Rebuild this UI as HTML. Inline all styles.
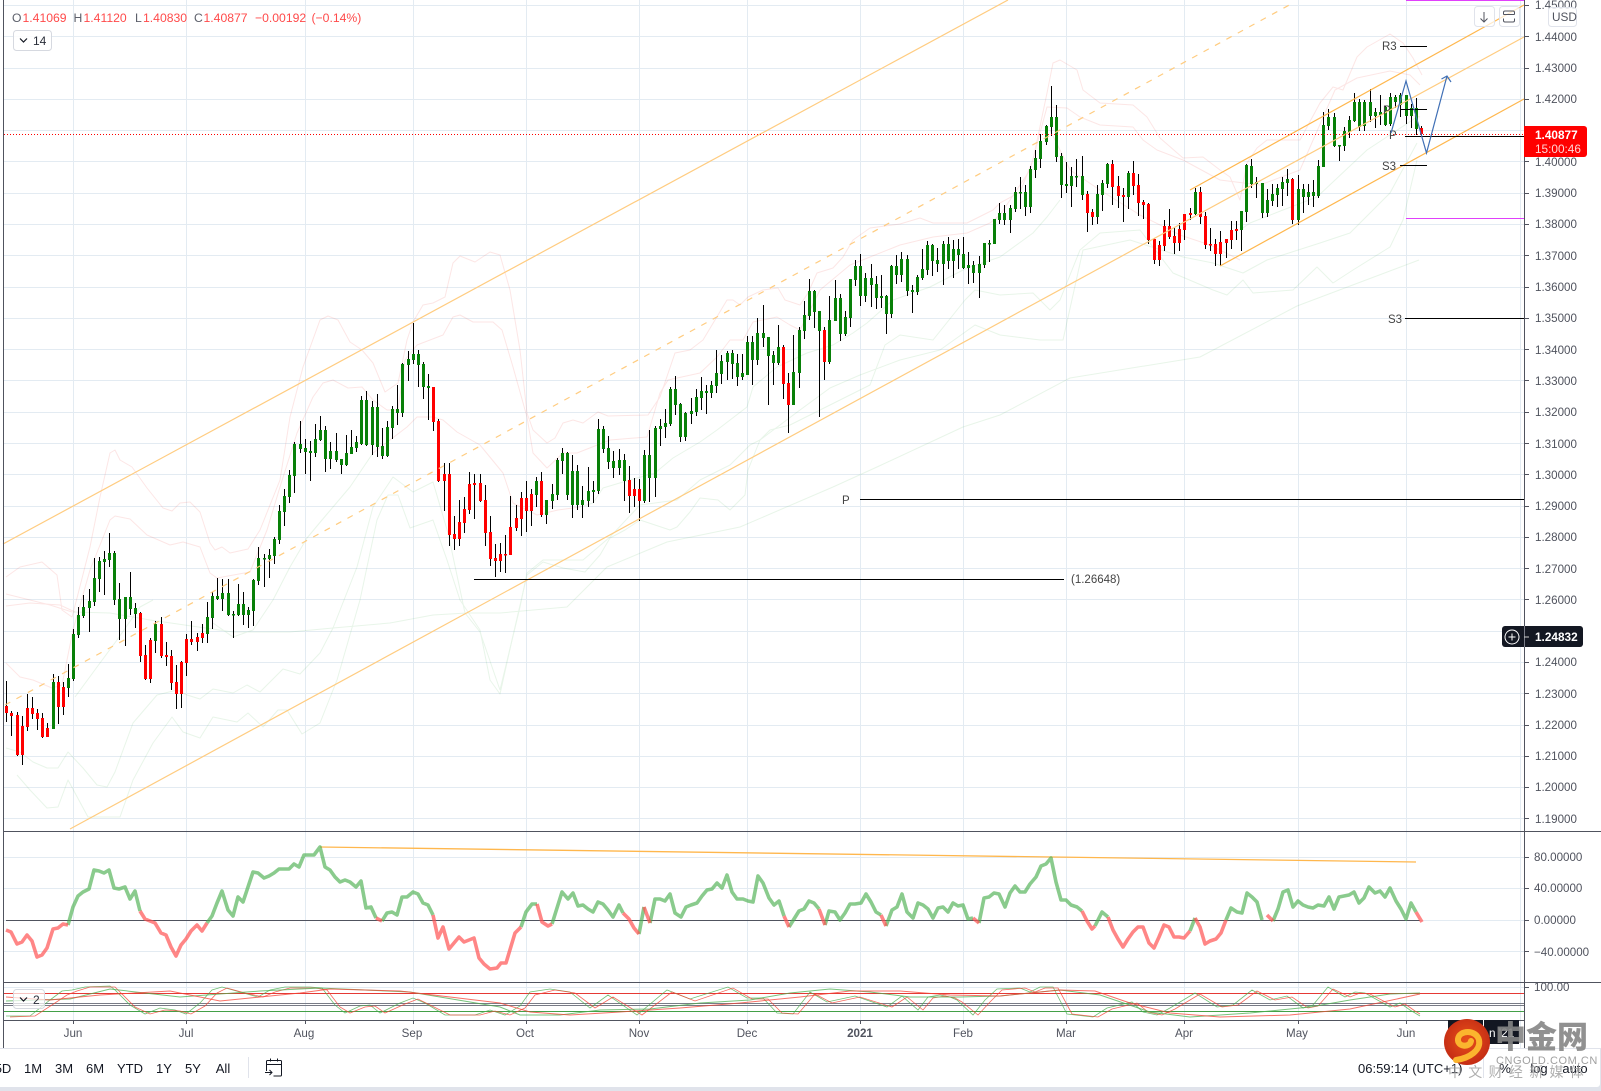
<!DOCTYPE html>
<html lang="en">
<head>
<meta charset="utf-8">
<title>Chart</title>
<style>
html,body{margin:0;padding:0;background:#fff;width:1601px;height:1091px;overflow:hidden}
svg{display:block;position:absolute;left:0;top:0}
text{font-family:"Liberation Sans","Noto Sans CJK SC",sans-serif}
.ax{font-size:11.6px;fill:#50535e}
.tm{font-size:11.6px;fill:#50535e;text-anchor:middle}
.tb{font-size:13px;fill:#131722;text-anchor:middle}
.lb{font-size:11.5px;fill:#444}
.o{font-size:12.2px;fill:#ff4a4a}
.og{font-size:12.2px;fill:#5d606b}
</style>
</head>
<body>
<svg width="1601" height="1091" viewBox="0 0 1601 1091" xmlns="http://www.w3.org/2000/svg">
<rect width="1601" height="1091" fill="#fff"/>

<!-- grid -->
<path stroke="#e3ebf2" stroke-width="1" fill="none" d="M73.5 0V1020M186.5 0V1020M305.5 0V1020M413.5 0V1020M526.5 0V1020M639.5 0V1020M747.5 0V1020M860.5 0V1020M963.5 0V1020M1066.5 0V1020M1184.5 0V1020M1298.5 0V1020M1406.5 0V1020M1520.5 0V1048"/>
<path stroke="#e3ebf2" stroke-width="1" fill="none" d="M4 5.5H1524M4 36.5H1524M4 68.5H1524M4 99.5H1524M4 130.5H1524M4 161.5H1524M4 193.5H1524M4 224.5H1524M4 255.5H1524M4 287.5H1524M4 318.5H1524M4 349.5H1524M4 380.5H1524M4 412.5H1524M4 443.5H1524M4 474.5H1524M4 506.5H1524M4 537.5H1524M4 568.5H1524M4 599.5H1524M4 631.5H1524M4 662.5H1524M4 693.5H1524M4 725.5H1524M4 756.5H1524M4 787.5H1524M4 818.5H1524M4 857.5H1524M4 888.5H1524M4 920.5H1524M4 951.5H1524M4 987.5H1524"/>

<!-- pale bands -->
<g fill="none" stroke-width="1" stroke-linejoin="round">
<g stroke="#ef5350" opacity=".14">
<polyline points="6,577 20,567 42,562 57,575 62,610 72,617 77,598 90,547 100,497 110,453 115,450 120,460 132,467 147,488 163,508 172,511 180,503 190,502 200,512 210,543 215,550 222,547 230,553 248,549 260,530 280,480 290,417 303,367 320,320 328,316 338,320 350,342 362,350 373,363 385,392 398,383 407,340 413,322 423,305 433,303 445,297 453,263 460,256 475,262 490,252 500,255 510,290 520,350 527,413 533,430 547,443 555,438 563,423 573,420 583,423 598,412 608,416 648,415 660,397 675,353 690,350 703,340 727,300 733,300 740,305 748,297 763,290 778,288 785,300 800,305 808,293 817,273 833,268 843,257 853,240 870,228 885,226 900,224 920,218 933,223 967,223 993,210 1000,203 1020,192 1033,160 1047,93 1053,63 1060,60 1077,70 1083,90 1100,103 1133,105 1147,117 1160,138 1183,158 1203,157 1220,170 1230,177 1240,200 1247,163 1257,148 1267,140 1300,140 1320,103 1333,87 1343,90 1357,57 1367,47 1390,34 1403,43 1413,58 1422,75"/>
<polyline points="6,663 20,677 33,680 52,688 62,685 73,630 90,570 110,520 115,516 130,519 147,535 170,545 183,542 200,547 210,573 217,578 250,572 267,530 280,487 297,433 313,397 323,383 333,380 348,388 362,387 373,400 387,410 398,410 405,360 417,345 430,340 443,335 453,317 460,315 473,322 493,322 502,330 513,367 527,417 533,453 547,468 563,453 577,453 610,440 647,437 660,393 668,380 700,373 717,357 730,340 743,340 753,322 777,317 790,325 800,330 820,290 850,265 900,245 933,237 967,233 990,223 1000,215 1030,170 1047,107 1067,108 1080,117 1100,125 1133,127 1143,140 1157,150 1183,160 1220,180 1260,185 1300,170 1335,90 1357,78 1390,71 1410,75 1420,85"/>
<polyline points="6,594 50,605 72,612"/>
<polyline points="6,606 30,603 60,605 75,612"/>
<polyline points="373,453 407,427 417,417 433,417 443,420 457,432 480,445 503,473 513,503 537,515 558,510 580,507"/>
<polyline points="1050,130 1070,170 1100,190 1140,215 1180,235 1210,245 1240,260"/>
<polyline points="1410,115 1420,117"/>
</g>
<g stroke="#4caf50" opacity=".12">
<polyline points="6,748 20,752 33,762 47,768 58,768 68,752 83,768 97,785 107,787 115,772 133,723 157,695 177,690 187,695 200,699 213,689 233,693 247,685 260,692 283,669 300,674 320,653 333,628 357,567 373,507 393,477 413,492 433,482 448,533 465,613 480,632 500,690"/>
<polyline points="17,775 30,790 47,808 58,807 68,780 88,817 120,817 133,780 153,743 172,717 183,732 200,738 213,717 237,722 248,713 263,727 278,710 287,710 302,734 320,723 337,680 360,600 377,520 388,495 398,495 410,528 433,520 447,560 460,600 480,630 490,680 500,694 512,640 527,575 543,562 563,568 585,572 600,555 610,538 625,530 640,520 655,525 670,530 677,527 690,512 700,498 718,500 730,510 745,495 748,470 760,440 770,430 790,425 810,415 840,400 870,385 885,345 900,335 933,340 965,300 975,290 1000,295 1033,293 1050,310 1060,300 1080,250 1100,233 1140,230 1173,273 1213,290 1227,295 1243,280 1253,293 1293,290 1317,267 1333,283 1353,270 1390,247 1403,220 1417,160"/>
<polyline points="500,690 520,607 527,573 543,560 583,560 610,537 640,505 677,500 700,480 730,465 750,445 760,440 800,410 830,388 860,375 900,360 940,350 975,325 1000,335 1040,340 1063,340 1083,250 1130,240 1183,257 1213,263 1243,273 1267,260 1320,243 1350,233 1390,193 1417,143"/>
<polyline points="75,697 100,663 117,640 140,607 153,600"/>
<polyline points="213,623 233,637 253,630 273,600 290,567 307,538 322,520 350,487 373,453"/>
<polyline points="580,507 593,503 603,488 623,482 655,473 673,458 700,442 717,430 747,407 753,387 777,367 807,353 833,345 853,333 867,323 893,300 930,287 967,268 1000,257 1033,233 1047,217 1060,200"/>
<polyline points="1240,230 1250,223 1283,210 1317,197 1367,150 1417,117"/>
<polyline points="73,612 110,613 150,620 233,632 290,632 333,628 390,623 433,615 467,613 500,613 567,607 607,567 667,542 740,527 833,487 877,467 963,427 1000,415 1070,378 1200,357 1297,306 1419,260"/>
</g>
</g>

<!-- wicks -->
<path stroke="#000" stroke-width="1" fill="none" shape-rendering="crispEdges" d="M6.5 681V722M11.5 711V736M17.5 712V756M22.5 716V765M27.5 694V731M32.5 697V719M37.5 709V730M42.5 713V738M47.5 723V737M53.5 674V729M58.5 676V724M63.5 682V715M68.5 664V697M73.5 629V681M78.5 607V638M83.5 595V618M89.5 589V632M94.5 558V606M99.5 557V592M104.5 551V595M109.5 533V567M114.5 551V605M119.5 583V640M125.5 597V646M130.5 572V615M135.5 603V628M140.5 612V662M145.5 645V680M150.5 638V683M155.5 621V653M161.5 617V658M166.5 642V666M171.5 650V690M176.5 665V709M181.5 661V708M186.5 634V676M191.5 621V645M197.5 633V651M202.5 624V643M207.5 602V643M212.5 592V629M217.5 578V600M222.5 579V611M228.5 579V616M233.5 611V638M238.5 584V616M243.5 592V625M248.5 607V628M253.5 579V626M258.5 547V585M264.5 554V587M269.5 549V578M274.5 537V564M279.5 505V544M284.5 489V526M289.5 470V503M294.5 442V493M300.5 421V453M305.5 439V474M310.5 441V481M315.5 424V457M320.5 416V441M325.5 426V472M330.5 442V469M336.5 433V462M341.5 459V474M346.5 435V466M351.5 430V454M356.5 436V452M361.5 396V445M366.5 391V446M372.5 401V455M377.5 394V457M382.5 428V459M387.5 421V457M392.5 406V439M397.5 385V425M402.5 363V417M408.5 351V381M413.5 323V364M418.5 350V387M423.5 362V399M428.5 374V420M433.5 387V431M438.5 419V482M444.5 463V511M449.5 463V546M454.5 516V550M459.5 500V546M464.5 497V533M469.5 472V514M474.5 474V519M480.5 474V502M485.5 485V546M490.5 516V566M495.5 544V577M500.5 543V572M505.5 535V573M510.5 496V555M516.5 505V531M521.5 492V536M526.5 481V532M531.5 489V526M536.5 477V507M541.5 472V517M546.5 500V524M552.5 484V509M557.5 458V500M562.5 448V474M567.5 452V500M572.5 455V518M577.5 465V510M582.5 486V518M588.5 467V507M593.5 481V503M598.5 419V494M603.5 426V453M608.5 436V469M613.5 451V478M619.5 449V475M624.5 454V501M629.5 466V513M634.5 478V507M639.5 479V521M644.5 450V503M649.5 430V502M655.5 426V497M660.5 419V446M665.5 409V438M670.5 387V426M675.5 376V415M680.5 403V442M685.5 412V441M691.5 398V424M696.5 389V416M701.5 377V410M706.5 385V414M711.5 381V398M716.5 350V393M721.5 355V384M727.5 351V380M732.5 350V379M737.5 354V386M742.5 354V380M747.5 336V375M752.5 336V385M757.5 318V365M763.5 305V347M768.5 337V405M773.5 351V385M778.5 325V365M783.5 345V399M788.5 373V433M793.5 335V405M799.5 327V388M804.5 301V339M809.5 279V320M814.5 290V328M819.5 311V417M824.5 327V380M829.5 296V364M835.5 280V321M840.5 294V341M845.5 311V336M850.5 279V327M855.5 260V286M860.5 254V306M865.5 273V302M871.5 264V307M876.5 276V309M881.5 275V308M886.5 295V334M891.5 265V318M896.5 255V284M901.5 252V282M907.5 255V296M912.5 285V313M917.5 275V295M922.5 249V280M927.5 241V275M932.5 244V276M937.5 248V272M943.5 241V285M948.5 237V269M953.5 240V278M958.5 239V269M963.5 237V269M968.5 252V284M973.5 261V283M979.5 256V298M984.5 243V268M989.5 240V262M994.5 219V244M999.5 203V224M1004.5 205V225M1010.5 205V233M1015.5 187V212M1020.5 177V209M1025.5 185V216M1030.5 166V213M1035.5 150V178M1040.5 134V168M1046.5 125V145M1051.5 86V136M1056.5 105V162M1061.5 153V198M1066.5 162V193M1071.5 167V207M1076.5 159V187M1082.5 156V200M1087.5 191V232M1092.5 209V225M1097.5 185V224M1102.5 180V211M1107.5 163V188M1112.5 160V205M1118.5 176V208M1123.5 188V222M1128.5 171V209M1133.5 161V195M1138.5 174V216M1143.5 200V219M1148.5 203V244M1154.5 238V264M1159.5 241V266M1164.5 220V251M1169.5 209V239M1174.5 228V254M1179.5 223V251M1184.5 214V240M1190.5 208V220M1195.5 188V215M1200.5 187V224M1205.5 212V249M1210.5 228V251M1215.5 239V266M1220.5 231V266M1226.5 239V258M1231.5 221V249M1236.5 221V240M1241.5 211V251M1246.5 164V222M1251.5 159V188M1256.5 177V198M1262.5 183V218M1267.5 189V217M1272.5 184V206M1277.5 184V207M1282.5 177V206M1287.5 169V196M1292.5 178V224M1298.5 175V225M1303.5 184V213M1308.5 184V205M1313.5 180V207M1318.5 160V198M1323.5 112V167M1328.5 109V130M1334.5 113V147M1339.5 145V161M1344.5 127V151M1349.5 116V138M1354.5 93V122M1359.5 99V131M1364.5 100V131M1370.5 89V122M1375.5 108V128M1380.5 95V125M1385.5 106V126M1390.5 93V126M1395.5 95V108M1400.5 93V117M1406.5 95V124M1411.5 104V128M1416.5 98V135M1421.5 126V135"/>

<!-- green bodies -->
<path stroke="#088008" stroke-width="3" fill="none" shape-rendering="crispEdges" d="M53.5 682V729M68.5 678V688M73.5 634V679M78.5 615V635M83.5 607V616M89.5 601V608M94.5 578V602M99.5 561V579M104.5 559V562M109.5 553V560M114.5 553V600M119.5 599V619M125.5 597V619M130.5 597V609M135.5 608V614M155.5 624V641M207.5 617V634M212.5 596V618M217.5 596V599M222.5 593V599M228.5 593V615M233.5 614V615.5M238.5 604V615M243.5 604V615M248.5 610V615M253.5 580V611M258.5 558V581M264.5 558V559.5M269.5 555V559M274.5 539V556M279.5 511V540M284.5 496V512M289.5 475V497M294.5 444V476M300.5 444V449M305.5 448V452M310.5 451V453M315.5 439V453M320.5 430V440M325.5 430V459M330.5 451V459M336.5 451V460M341.5 459V465M346.5 453V465M351.5 447V454M356.5 442V448M361.5 400V444M366.5 400V445M372.5 407V445M377.5 407V447M382.5 446V456M387.5 427V456M392.5 409V428M397.5 409V413M402.5 364V413M408.5 359V365M413.5 354V360M418.5 354V365M423.5 364V387M428.5 386V388M536.5 481V495M546.5 500V515M552.5 494V501M557.5 460V495M562.5 453V461M567.5 453V495M572.5 471V505M577.5 471V505M582.5 500V505M588.5 491V501M593.5 490V492M598.5 429V491M603.5 429V449M608.5 448V462M613.5 461V468M619.5 460V468M624.5 460V481M644.5 455V501M649.5 455V478M655.5 428V478M660.5 426V429M665.5 423V427M670.5 389V424M675.5 389V405M680.5 404V437M685.5 413V437M691.5 411V414M696.5 397V412M701.5 391V398M706.5 391V393M711.5 385V393M716.5 373V386M721.5 361V374M727.5 353V362M732.5 353V364M737.5 363V377M742.5 373V377M747.5 342V375M752.5 342V360M757.5 333V360M763.5 333V338M768.5 337V356M773.5 355V363M778.5 347V363M793.5 372V405M799.5 330V373M804.5 315V331M809.5 291V316M814.5 291V312M819.5 311V331M829.5 320V362M835.5 298V321M840.5 298V334M845.5 317V334M850.5 279V318M855.5 266V280M860.5 266V296M865.5 278V296M871.5 278V285M876.5 284V298M881.5 296V298M886.5 296V314M891.5 266V314M896.5 266V275M901.5 259V275M907.5 259V291M912.5 290V292M917.5 277V292M922.5 269V278M927.5 245V270M932.5 245V261M937.5 260V264M943.5 244V264M948.5 244V261M953.5 249V261M958.5 249V255M963.5 254V268M968.5 265V268M973.5 265V273M979.5 264V273M984.5 243V265M989.5 243V244.5M994.5 219V244M999.5 213V220M1004.5 213V220M1010.5 208V220M1015.5 192V209M1020.5 192V193.5M1025.5 192V207M1030.5 169V207M1035.5 158V170M1040.5 141V159M1046.5 126V142M1051.5 117V127M1056.5 117V157M1061.5 156V185M1066.5 184V186M1071.5 176V186M1076.5 176V177.5M1082.5 176V195M1097.5 194V217M1102.5 183V195M1107.5 164V184M1128.5 173V197M1195.5 192V214M1241.5 211V230M1246.5 165V212M1251.5 166V184M1256.5 182V184M1262.5 183V213M1267.5 200V213M1272.5 194V201M1277.5 188V195M1282.5 182V189M1287.5 179V183M1298.5 189V220M1303.5 189V197M1308.5 192V197M1313.5 192V196M1318.5 166V196M1323.5 125V167M1328.5 117V126M1334.5 117V146M1339.5 145V146.5M1344.5 131V146M1349.5 120V132M1354.5 102V121M1359.5 102V127M1364.5 102V126M1370.5 102V116M1375.5 112V116M1380.5 112V115M1385.5 107V125M1390.5 97V124M1395.5 97V102M1400.5 95V105M1406.5 95V116M1411.5 108V116M1416.5 108V129"/>

<!-- red bodies -->
<path stroke="#ff0000" stroke-width="3" fill="none" shape-rendering="crispEdges" d="M6.5 706V713M11.5 713V716M17.5 715V755M22.5 726V755M27.5 708V727M32.5 708V714M37.5 713V719M42.5 718V737M47.5 728V737M58.5 682V707M63.5 687V707M140.5 613V656M145.5 655V679M150.5 640V679M161.5 624V656M166.5 655V657M171.5 656V683M176.5 682V694M181.5 662V694M186.5 639V663M191.5 639V642M197.5 637V642M202.5 633V638M433.5 387V422M438.5 421V481M444.5 474V481M449.5 474V535M454.5 534V539M459.5 522V539M464.5 509V523M469.5 484V510M474.5 483V485M480.5 483V501M485.5 500V533M490.5 532V559M495.5 558V561M500.5 554V561M505.5 554V555.5M510.5 527V555M516.5 518V528M521.5 498V519M526.5 498V511M531.5 494V511M541.5 481V515M629.5 480V496M634.5 489V496M639.5 489V501M783.5 347V384M788.5 383V405M824.5 330V362M1087.5 194V213M1092.5 212V217M1112.5 164V187M1118.5 186V196M1123.5 195V197M1133.5 173V186M1138.5 185V203M1143.5 202V205M1148.5 204V240M1154.5 239V260M1159.5 245V260M1164.5 226V246M1169.5 226V237M1174.5 236V243M1179.5 229V243M1184.5 214V230M1190.5 213V215M1200.5 192V217M1205.5 216V245M1210.5 244V245.5M1215.5 244V254M1220.5 242V254M1226.5 239V243M1231.5 230V240M1236.5 229V231M1292.5 179V220M1421.5 128V134"/>

<!-- channel lines -->
<g fill="none" stroke-width="1.2">
<path stroke="#ffcc80" d="M3 544L1008 0"/>
<path stroke="#ffcc80" stroke-dasharray="6 7" d="M5 705L1293 3"/>
<path stroke="#ffcc80" d="M70 829L1524 37"/>
<path stroke="#ffb74d" d="M1190 190L1524 5"/>
<path stroke="#ffb74d" d="M1220 266L1524 99"/>
</g>

<!-- price dotted -->
<path stroke="#f00" stroke-width="1" stroke-dasharray="1 2" d="M4 134.5H1524"/>

<!-- horizontals -->
<g stroke-width="1" shape-rendering="crispEdges" fill="none">
<path stroke="#e040fb" d="M1406 0.5H1524M1406 218.5H1524"/>
<path stroke="#000" d="M1400 46.5H1427M1400 109.5H1427M1400 165.5H1427M1405 136.5H1524M1405 318.5H1524M860 499.5H1524M474 579.5H1064"/>
</g>
<text class="lb" x="1382" y="50">R3</text>
<text class="lb" x="1383" y="114">P</text>
<text class="lb" x="1389" y="139">P</text>
<text class="lb" x="1382" y="170">S3</text>
<text class="lb" x="1388" y="323">S3</text>
<text class="lb" x="842" y="504">P</text>
<text class="lb" x="1071" y="583">(1.26648)</text>

<!-- blue zig -->
<g fill="none" stroke="#3f6fb5" stroke-width="1.2">
<path d="M1391 133L1406 81L1426.5 153L1447 76"/>
<path d="M1441.500 79L1447 76L1451 82"/>
</g>

<!-- RSI -->
<path d="M6 920.5H1420" stroke="#50535e" stroke-width="1"/>
<path d="M320 847L1416 862" stroke="#ffb74d" stroke-width="1.3" fill="none"/>
<g fill="none" stroke-width="3.6" stroke-linejoin="round">
<path stroke="#4caf50" opacity=".65" d="M68 925L73 907L78 896L83 892L89 889L94 870L99 871L104 873L109 870L114 888L119 889L125 887L130 899L135 891L140 911M207 923L212 916L217 903L222 891L228 910L233 916L238 897L243 902L248 887L253 872L258 873L264 878L269 876L274 873L279 869L284 869L289 869L294 864L299 867L304 855L309 855L314 855L320 847L325 867L330 870L335 877L340 882L345 880L350 882L356 887L361 881L366 908L371 907L376 918M382 921L387 913L392 912L397 915L402 897L407 897L413 892L418 894L423 903L428 905L433 915M521 927L526 912L532 904L537 904M552 924L557 908L562 892L568 899L573 893L578 906L583 905L588 909L593 912L598 902L603 904L608 910L613 917L619 905L623 913M639 934L644 907M650 923L655 899L660 899L665 901L670 894L675 913L681 917L686 907L691 905L697 903L702 896L707 890L712 889L717 883L722 888L727 875L732 892L737 899L743 899L748 901L753 902L758 876L763 883L769 898L774 905L779 901L784 916M789 927L794 919L799 911L804 909L809 901L814 903L819 909M825 925L829 911L835 912L840 920L845 913L850 904L855 904L861 903L866 894L871 902L876 912L881 915M886 926L892 910L897 907L902 894L907 912L913 918L918 903L923 905L928 909L933 918L938 908L943 907L948 912L953 903L958 906L963 905L968 919L973 918M979 923L984 898L989 897L994 893L999 894L1005 907L1010 893L1015 886L1020 892L1025 892L1030 884L1036 877L1041 866L1046 864L1051 858L1056 882L1061 900L1066 900L1071 905L1077 907L1082 911M1095 926L1102 912L1108 917M1190 931L1195 918M1226 920L1231 908L1237 912L1242 913L1247 893L1252 897L1257 902L1262 920M1273 921L1278 909L1283 892L1288 890L1293 907L1298 901L1303 905L1308 907L1313 908L1318 905L1324 906L1329 897L1334 909L1339 897L1344 896L1349 895L1354 892L1359 903L1364 898L1369 887L1375 893L1380 891L1385 897L1390 888L1396 901L1401 909L1406 919L1411 903L1416 912"/>
<path stroke="#ff5252" opacity=".7" d="M6 930L11 932L17 944L22 942L27 935L32 941L37 957L42 955L47 948L53 929L58 928L63 924L68 925M140 911L145 919L150 921L155 923L161 933L166 935L171 947L176 956L181 945L186 939L191 931L197 925L202 931L207 923M376 918L382 921M433 915L438 938L443 927L449 949L459 937L464 942L474 938L479 958L484 964L490 969L497 968L501 963L506 963L515 933L521 927M537 904L542 922L548 926L552 924M623 913L629 919L634 928L639 934M644 907L650 923M784 916L789 927M819 909L825 925M881 915L886 926M973 918L979 923M1082 911L1087 921L1092 929L1095 926M1108 917L1113 930L1118 939L1123 947L1128 939L1133 932L1138 927L1143 927L1149 943L1154 948L1159 937L1164 925L1169 927L1174 937L1179 937L1184 938L1190 931M1195 918L1200 927L1205 944L1210 941L1216 939L1221 933L1226 920M1267 915L1273 921M1416 912L1422 922"/>
</g>

<!-- stochastic -->
<g fill="none">
<path d="M4 1003.500H1524M4 1005.500H1524" stroke="#787b86" stroke-width="1"/>
<path d="M4 993.500H1524" stroke="#e53935" stroke-width="1"/>
<path d="M4 1011.500H1524" stroke="#43a047" stroke-width="1"/>
<polyline stroke="#4caf50" stroke-width=".8" opacity=".8" points="6,1016 30,1016 50,1000 62,991 72,990 85,987 110,986 115,990 130,1005 145,1014 160,1008 175,1010 186,1014 200,1003 212,990 222,987 240,992 258,997 270,990 285,987 310,987 322,988 335,1005 345,1013 360,1006 370,1005 380,1013 400,1003 413,998 425,1003 445,1015 475,1015 490,1010 505,1015 520,1006 530,992 550,989 570,992 590,1008 608,995 637,1015 667,990 690,999 728,987 747,998 763,998 777,1013 793,1014 810,992 827,1002 855,996 887,1007 902,996 918,1010 928,997 940,995 950,997 957,1000 973,1015 985,1000 997,989 1020,988 1030,992 1040,987 1053,987 1067,1014 1093,1017 1107,1008 1132,1002 1143,1012 1157,1015 1170,1008 1195,993 1217,1007 1233,1005 1252,990 1270,1000 1287,996 1303,1008 1313,1005 1328,987 1345,997 1355,992 1365,993 1390,1007 1400,1003 1410,1010 1420,1016"/>
<polyline stroke="#f44336" stroke-width=".8" opacity=".8" points="10,1017 35,1016 55,1003 67,995 77,991 90,987 115,987 120,992 135,1007 150,1014 165,1010 180,1011 191,1014 205,1006 217,993 227,988 245,993 263,997 275,992 290,988 315,988 327,990 340,1007 350,1013 365,1007 375,1006 385,1013 405,1004 418,999 430,1005 450,1015 480,1015 495,1011 510,1015 525,1008 535,995 555,990 575,993 595,1008 613,997 642,1015 672,992 695,1001 733,988 752,999 768,999 782,1013 798,1014 815,994 832,1003 860,997 892,1007 907,997 923,1010 933,998 945,996 955,998 962,1002 978,1015 990,1002 1002,990 1025,988 1035,992 1045,988 1058,988 1072,1014 1098,1017 1112,1009 1137,1003 1148,1012 1162,1015 1175,1009 1200,994 1222,1007 1238,1005 1257,991 1275,1000 1292,997 1308,1008 1318,1006 1333,989 1350,997 1360,993 1370,994 1395,1007 1405,1004 1415,1011 1420,1014"/>
<polyline stroke="#4caf50" stroke-width="1" opacity=".75" points="6,1001 70,999 110,989 180,997 260,991 320,988 410,992 500,1007 520,1015 560,1015 600,1010 650,1009 700,1003 750,1000 790,993 830,989 870,992 910,997 960,997 1000,996 1060,990 1100,995 1150,1012 1190,1017 1250,1013 1310,1007 1350,1000 1390,994 1420,993"/>
<polyline stroke="#f44336" stroke-width="1" opacity=".75" points="6,997 50,1000 100,995 170,991 220,1001 300,993 330,989 400,991 500,1003 530,1012 570,1015 620,1012 680,1008 740,1003 800,997 850,991 900,991 950,995 1000,996 1060,990 1095,991 1130,1003 1170,1013 1220,1017 1290,1015 1350,1009 1420,994"/>
</g>

<!-- frame lines -->
<g stroke="#50535e" stroke-width="1" fill="none" shape-rendering="crispEdges">
<path d="M3.500 0V1048"/>
<path d="M1524.500 0V1048"/>
<path d="M3 831.500H1601M3 982.500H1601M3 1020.500H1524"/>
<path d="M1524 5.500h5M1524 36.500h5M1524 68.500h5M1524 99.500h5M1524 161.500h5M1524 193.500h5M1524 224.500h5M1524 255.500h5M1524 287.500h5M1524 318.500h5M1524 349.500h5M1524 380.500h5M1524 412.500h5M1524 443.500h5M1524 474.500h5M1524 506.500h5M1524 537.500h5M1524 568.500h5M1524 599.500h5M1524 631.500h5M1524 662.500h5M1524 693.500h5M1524 725.500h5M1524 756.500h5M1524 787.500h5M1524 818.500h5M1524 857.500h5M1524 888.500h5M1524 920.500h5M1524 951.500h5M1524 987.500h5"/>
<path d="M73.500 1020v4M186.500 1020v4M305.500 1020v4M413.500 1020v4M526.500 1020v4M639.500 1020v4M747.500 1020v4M860.500 1020v4M963.500 1020v4M1066.500 1020v4M1184.500 1020v4M1298.500 1020v4M1406.500 1020v4"/>
</g>

<!-- axis labels -->
<g class="ax">
<text class="ax" x="1535" y="9">1.45000</text>
<text class="ax" x="1535" y="41">1.44000</text>
<text class="ax" x="1535" y="72">1.43000</text>
<text class="ax" x="1535" y="103">1.42000</text>
<text class="ax" x="1535" y="166">1.40000</text>
<text class="ax" x="1535" y="197">1.39000</text>
<text class="ax" x="1535" y="228">1.38000</text>
<text class="ax" x="1535" y="260">1.37000</text>
<text class="ax" x="1535" y="291">1.36000</text>
<text class="ax" x="1535" y="322">1.35000</text>
<text class="ax" x="1535" y="354">1.34000</text>
<text class="ax" x="1535" y="385">1.33000</text>
<text class="ax" x="1535" y="416">1.32000</text>
<text class="ax" x="1535" y="448">1.31000</text>
<text class="ax" x="1535" y="479">1.30000</text>
<text class="ax" x="1535" y="510">1.29000</text>
<text class="ax" x="1535" y="541">1.28000</text>
<text class="ax" x="1535" y="573">1.27000</text>
<text class="ax" x="1535" y="604">1.26000</text>
<text class="ax" x="1535" y="666">1.24000</text>
<text class="ax" x="1535" y="698">1.23000</text>
<text class="ax" x="1535" y="729">1.22000</text>
<text class="ax" x="1535" y="760">1.21000</text>
<text class="ax" x="1535" y="791">1.20000</text>
<text class="ax" x="1535" y="823">1.19000</text>
<text class="ax" x="1534" y="861">80.00000</text>
<text class="ax" x="1534" y="892">40.00000</text>
<text class="ax" x="1534" y="924">0.00000</text>
<text class="ax" x="1534" y="956">−40.00000</text>
<text class="ax" x="1534" y="991">100.00</text>
</g>

<!-- current price label -->
<path d="M1524 126H1584a3 3 0 0 1 3 3V154a3 3 0 0 1-3 3H1524Z" fill="#f00"/>
<text x="1535" y="139" font-size="11.800" font-weight="bold" fill="#fff">1.40877</text>
<text x="1535" y="153" font-size="11.800" fill="#ffd6d6">15:00:46</text>

<!-- crosshair price label -->
<path d="M1505 626H1580a3 3 0 0 1 3 3V644a3 3 0 0 1-3 3H1505a3 3 0 0 1-3-3V629a3 3 0 0 1 3-3Z" fill="#131722"/>
<path d="M1524.500 626V647" stroke="#787b86"/>
<path d="M1524 637h5" stroke="#ccc"/>
<circle cx="1512" cy="637" r="7" fill="none" stroke="#fff" stroke-width="1"/>
<path d="M1508.500 637h7M1512 633.500v7" stroke="#fff" stroke-width="1"/>
<text x="1535" y="641" font-size="11.800" font-weight="bold" fill="#fff">1.24832</text>

<!-- top right buttons -->
<g fill="#fff" fill-opacity=".7" stroke="#e0e3eb">
<rect x="1474.500" y="6.500" width="20" height="20" rx="3"/>
<rect x="1499.500" y="6.500" width="20" height="20" rx="3"/>
<rect x="1548.500" y="7.500" width="28" height="19" rx="3" fill-opacity=".85"/>
</g>
<path d="M1484 12v10M1480.500 18.500L1484 22L1487.500 18.500" fill="none" stroke="#50535e" stroke-width="1"/>
<path d="M1503.500 14.500v-2a1.500 1.500 0 0 1 1.500-1.500h8a1.500 1.500 0 0 1 1.500 1.500v2M1503.500 18.500v2a1.500 1.500 0 0 0 1.500 1.500h8a1.500 1.500 0 0 0 1.500-1.500v-2M1503.500 14.500h11" fill="none" stroke="#50535e" stroke-width="1"/>
<text x="1552" y="21" font-size="11.800" fill="#50535e">USD</text>

<!-- legend -->
<text class="og" x="12" y="22">O</text><text class="o" x="22.500" y="22">1.41069</text>
<text class="og" x="73.500" y="22">H</text><text class="o" x="83.500" y="22">1.41120</text>
<text class="og" x="135" y="22">L</text><text class="o" x="143" y="22">1.40830</text>
<text class="og" x="194" y="22">C</text><text class="o" x="203.500" y="22">1.40877</text>
<text class="o" x="255" y="22">−0.00192</text>
<text class="o" x="311.500" y="22">(−0.14%)</text>

<rect x="13.500" y="30.500" width="38" height="20" rx="3" fill="#fff" fill-opacity=".85" stroke="#d6d9e0"/>
<path d="M20 38.500L23.500 42L27 38.500" fill="none" stroke="#131722" stroke-width="1.200"/>
<text x="33" y="45" font-size="12" fill="#2a2e39">14</text>

<rect x="13.500" y="989.500" width="31" height="19" rx="3" fill="#fff" fill-opacity=".7" stroke="#d6d9e0"/>
<path d="M20 997.500L23.500 1001L27 997.500" fill="none" stroke="#131722" stroke-width="1.200"/>
<text x="33" y="1004" font-size="12" fill="#2a2e39">2</text>

<!-- time labels -->
<text class="tm" x="73" y="1037">Jun</text>
<text class="tm" x="186" y="1037">Jul</text>
<text class="tm" x="304" y="1037">Aug</text>
<text class="tm" x="412" y="1037">Sep</text>
<text class="tm" x="525" y="1037">Oct</text>
<text class="tm" x="639" y="1037">Nov</text>
<text class="tm" x="747" y="1037">Dec</text>
<text class="tm" x="860" y="1037" font-weight="bold">2021</text>
<text class="tm" x="963" y="1037">Feb</text>
<text class="tm" x="1066" y="1037">Mar</text>
<text class="tm" x="1184" y="1037">Apr</text>
<text class="tm" x="1297" y="1037">May</text>
<text class="tm" x="1406" y="1037">Jun</text>

<!-- date crosshair label -->
<rect x="1448" y="1020" width="71" height="24" fill="#131722"/>
<path d="M1483.500 1020v24" stroke="#fff"/>
<text x="1489" y="1037" font-size="11.800" fill="#fff">n '21</text>

<!-- bottom toolbar -->
<path d="M0 1048.500H1601" stroke="#e0e3eb"/>
<path d="M0 1087H1597a3 3 0 0 0 3-3V1048h1V1091H0Z" fill="#e0e3eb"/>
<text class="tb" x="3" y="1073">5D</text>
<text class="tb" x="33" y="1073">1M</text>
<text class="tb" x="64" y="1073">3M</text>
<text class="tb" x="95" y="1073">6M</text>
<text class="tb" x="130" y="1073">YTD</text>
<text class="tb" x="164" y="1073">1Y</text>
<text class="tb" x="193" y="1073">5Y</text>
<text class="tb" x="223" y="1073">All</text>
<path d="M248.500 1057v21" stroke="#e0e3eb"/>
<g fill="none" stroke="#131722" stroke-width="1">
<path d="M266.500 1071v-9.500a1 1 0 0 1 1-1h13a1 1 0 0 1 1 1v13.500a1 1 0 0 1-1 1h-7M266.500 1064.500h15M270.500 1058.500v3M277.500 1058.500v3"/>
<path d="M265 1072.500h7M269.500 1070l2.500 2.500l-2.500 2.500"/>
</g>
<text x="1358" y="1073" font-size="13" fill="#131722">06:59:14 (UTC+1)</text>
<path d="M1483.500 1057v21" stroke="#e0e3eb"/>
<text class="tb" x="1505" y="1073">%</text>
<text class="tb" x="1539" y="1073">log</text>
<text class="tb" x="1575" y="1073">auto</text>

<!-- watermark -->
<defs>
<radialGradient id="wm" cx="50%" cy="45%" r="55%"><stop offset="0" stop-color="#e8501a"/><stop offset="1" stop-color="#c42c14"/></radialGradient>
</defs>
<circle cx="1467" cy="1042" r="23" fill="url(#wm)"/>
<path d="M1456 1060C1470 1058 1481 1050 1479 1040C1476 1029 1459 1030 1458 1039C1457 1047 1470 1048 1471 1041" fill="none" stroke="#fbb52e" stroke-width="6" stroke-linecap="round"/>
<text x="1495" y="1048" font-size="31" font-weight="900" fill="#858585" fill-opacity=".9" style="font-family:'Noto Sans CJK SC','Noto Serif CJK SC',sans-serif">中金网</text>
<text x="1496" y="1064" font-size="11" fill="#a0a0a0" letter-spacing=".55">CNGOLD.COM.CN</text>
<text x="1448" y="1077" font-size="14" fill="#a0a0a0" fill-opacity=".85" letter-spacing="6.300">中文财经新媒体</text>
</svg>
</body>
</html>
